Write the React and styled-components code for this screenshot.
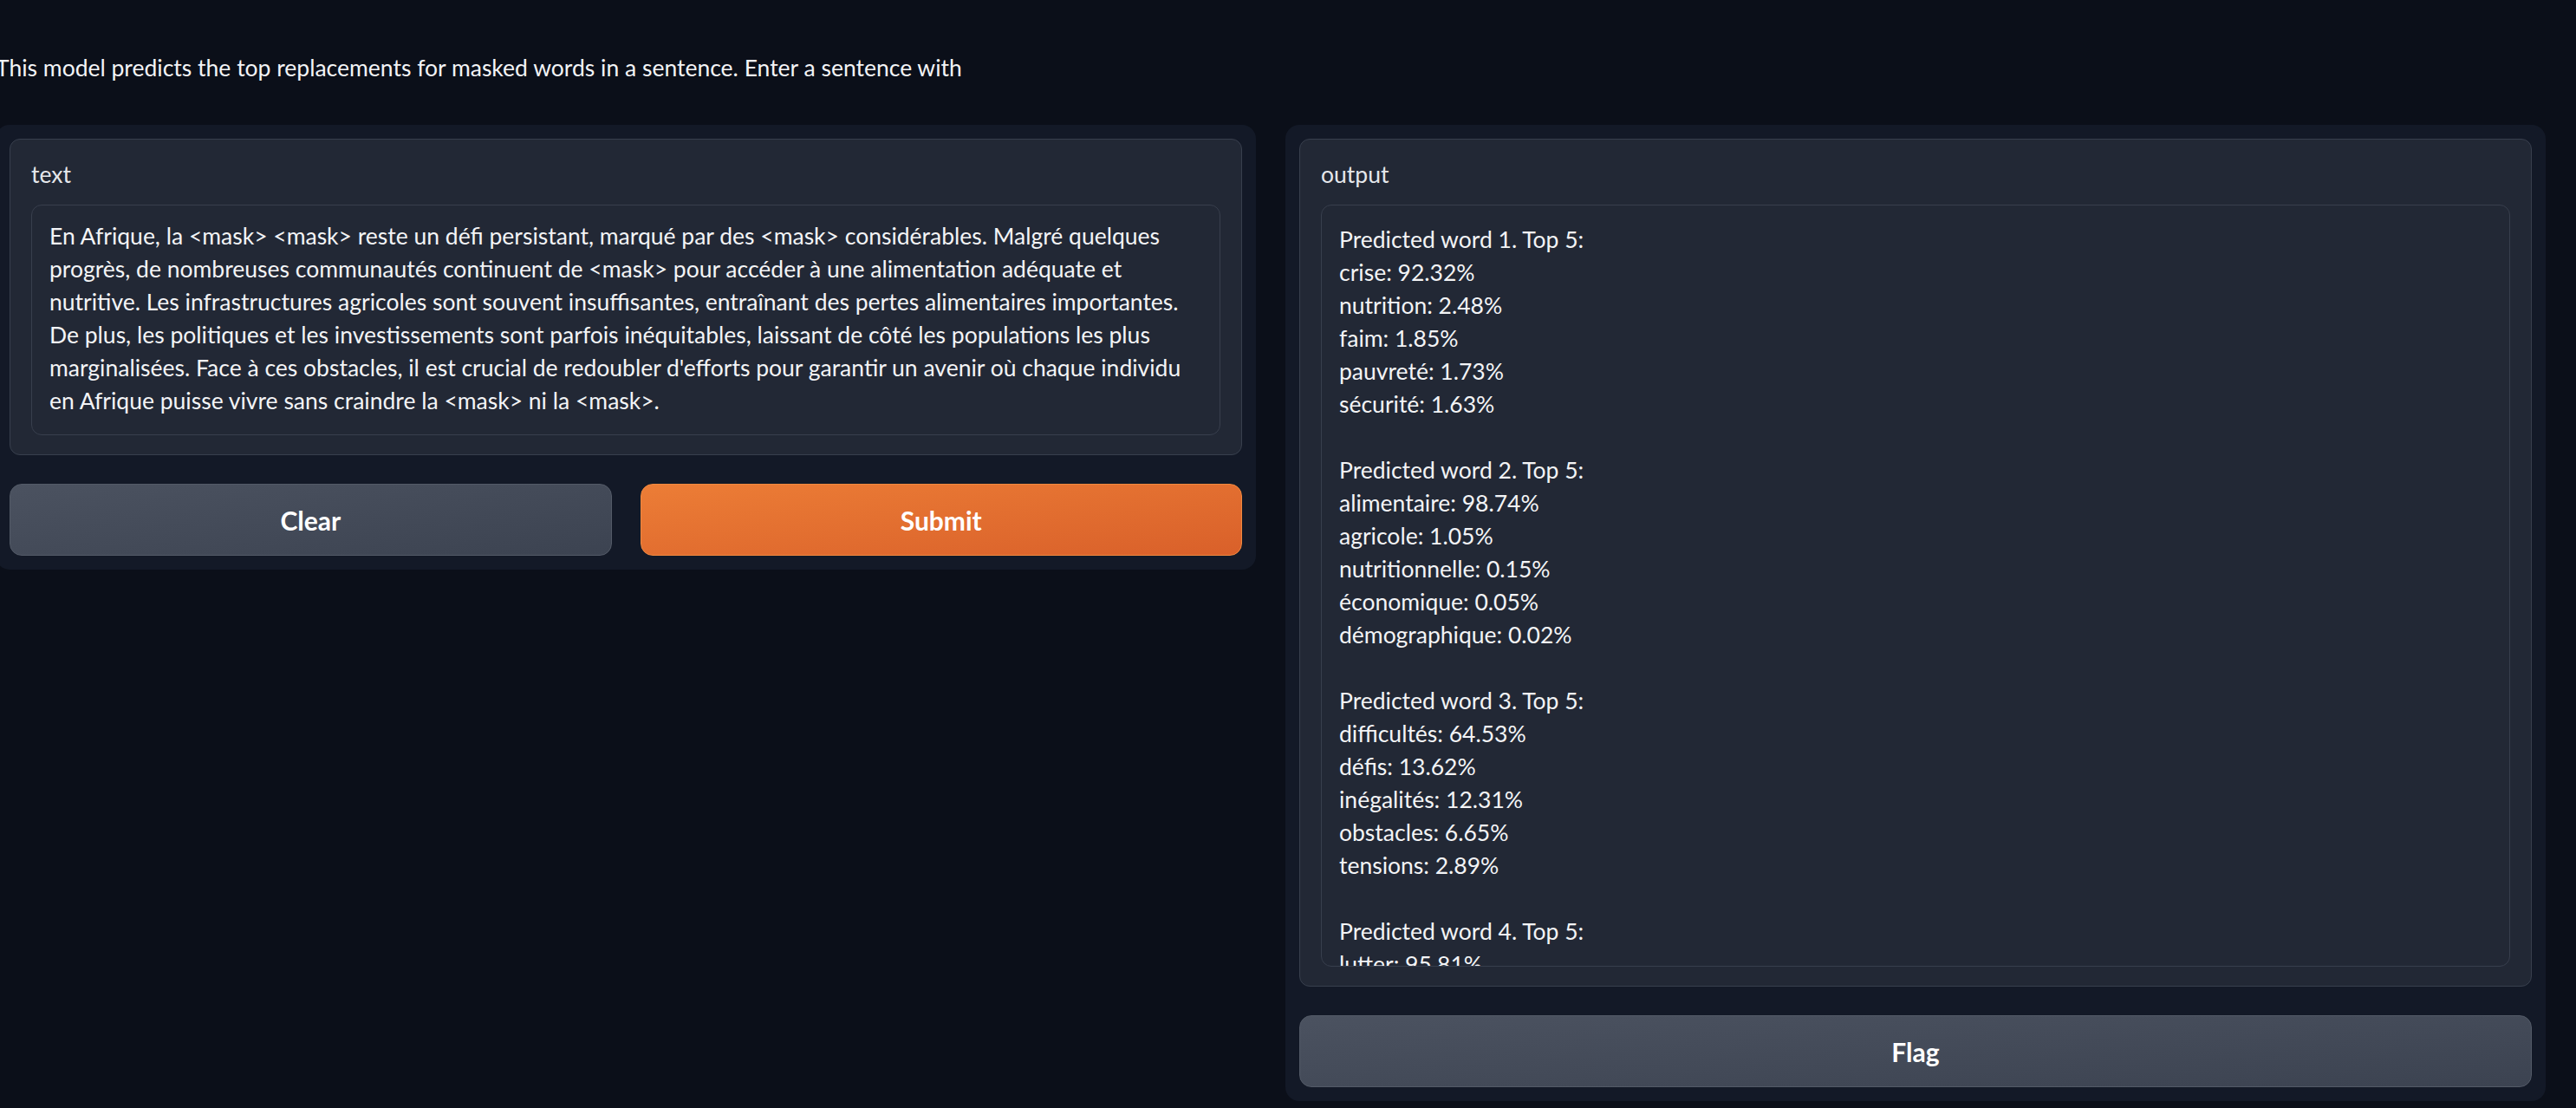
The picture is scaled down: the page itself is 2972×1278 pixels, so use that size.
import React from 'react';
import styled, { createGlobalStyle } from 'styled-components';

const GlobalStyle = createGlobalStyle`
  html, body {
    margin: 0;
    padding: 0;
    background: #0b0f19;
    overflow: hidden;
  }
  body {
    font-family: Lato, "Liberation Sans", sans-serif;
    color: #f3f4f6;
  }
`;

const inputText = `En Afrique, la <mask> <mask> reste un défi persistant, marqué par des <mask> considérables. Malgré quelques
progrès, de nombreuses communautés continuent de <mask> pour accéder à une alimentation adéquate et
nutritive. Les infrastructures agricoles sont souvent insuffisantes, entraînant des pertes alimentaires importantes.
De plus, les politiques et les investissements sont parfois inéquitables, laissant de côté les populations les plus
marginalisées. Face à ces obstacles, il est crucial de redoubler d'efforts pour garantir un avenir où chaque individu
en Afrique puisse vivre sans craindre la <mask> ni la <mask>.`;

const predictions = [
  ['crise: 92.32%', 'nutrition: 2.48%', 'faim: 1.85%', 'pauvreté: 1.73%', 'sécurité: 1.63%'],
  ['alimentaire: 98.74%', 'agricole: 1.05%', 'nutritionnelle: 0.15%', 'économique: 0.05%', 'démographique: 0.02%'],
  ['difficultés: 64.53%', 'défis: 13.62%', 'inégalités: 12.31%', 'obstacles: 6.65%', 'tensions: 2.89%'],
  ['lutter: 95.81%', 'survivre: 2.10%', 'travailler: 0.74%', 'se battre: 0.52%', 'compter: 0.31%'],
];

const outputText = predictions
  .map((words, i) => `Predicted word ${i + 1}. Top 5:\n${words.join('\n')}`)
  .join('\n\n');

export default function App() {
  return (
    <Page>
      <GlobalStyle />
      <Description>
        This model predicts the top replacements for masked words in a sentence. Enter a sentence with
      </Description>
      <Row>
        <Panel>
          <Block>
            <Label>text</Label>
            <TextBox>{inputText}</TextBox>
          </Block>
          <ButtonRow>
            <Button>Clear</Button>
            <Button primary>Submit</Button>
          </ButtonRow>
        </Panel>
        <Panel>
          <Block>
            <Label>output</Label>
            <OutputBox>{outputText}</OutputBox>
          </Block>
          <Button>Flag</Button>
        </Panel>
      </Row>
    </Page>
  );
}

const Page = styled.div`
  margin-left: -5px;
  width: 2976px;
  height: 1278px;
`;

const Description = styled.p`
  margin: 0;
  padding-top: 59px;
  height: 144px;
  box-sizing: border-box;
  font-size: 26.5px;
  line-height: 38px;
  color: #f3f4f6;
`;

const Row = styled.div`
  display: grid;
  grid-template-columns: 1454px 1454px;
  column-gap: 34px;
  align-items: start;
`;

const Panel = styled.div`
  display: flex;
  flex-direction: column;
  gap: 33px;
  padding: 16px;
  background: #131927;
  border-radius: 16px;
`;

const Block = styled.div`
  display: flex;
  flex-direction: column;
  padding: 21px 24px 22px;
  background: #222835;
  border: 1px solid #383f4d;
  border-radius: 12px;
`;

const Label = styled.span`
  font-size: 26.5px;
  line-height: 38px;
  margin-bottom: 16px;
  color: #e5e7eb;
`;

const TextBox = styled.div`
  padding: 16px 20px 20px;
  border: 1px solid #383f4d;
  border-radius: 12px;
  background: #222835;
  font-size: 26.5px;
  line-height: 38px;
  white-space: pre;
  overflow: hidden;
  color: #f3f4f6;
`;

const OutputBox = styled(TextBox)`
  height: 879px;
  box-sizing: border-box;
  padding: 20px 20px 0;
`;

const ButtonRow = styled.div`
  display: grid;
  grid-template-columns: 1fr 1fr;
  gap: 33px;
`;

const Button = styled.button`
  height: 83px;
  border-radius: 14px;
  font-family: Lato, "Liberation Sans", sans-serif;
  font-weight: 700;
  font-size: 30px;
  color: #ffffff;
  cursor: pointer;
  border: 1px solid ${(p) => (p.primary ? '#f0893f' : '#535a67')};
  background: ${(p) =>
    p.primary
      ? 'linear-gradient(to bottom right, #ec7d36, #d9602a)'
      : 'linear-gradient(to bottom right, #4b5260, #3c4351)'};
`;
